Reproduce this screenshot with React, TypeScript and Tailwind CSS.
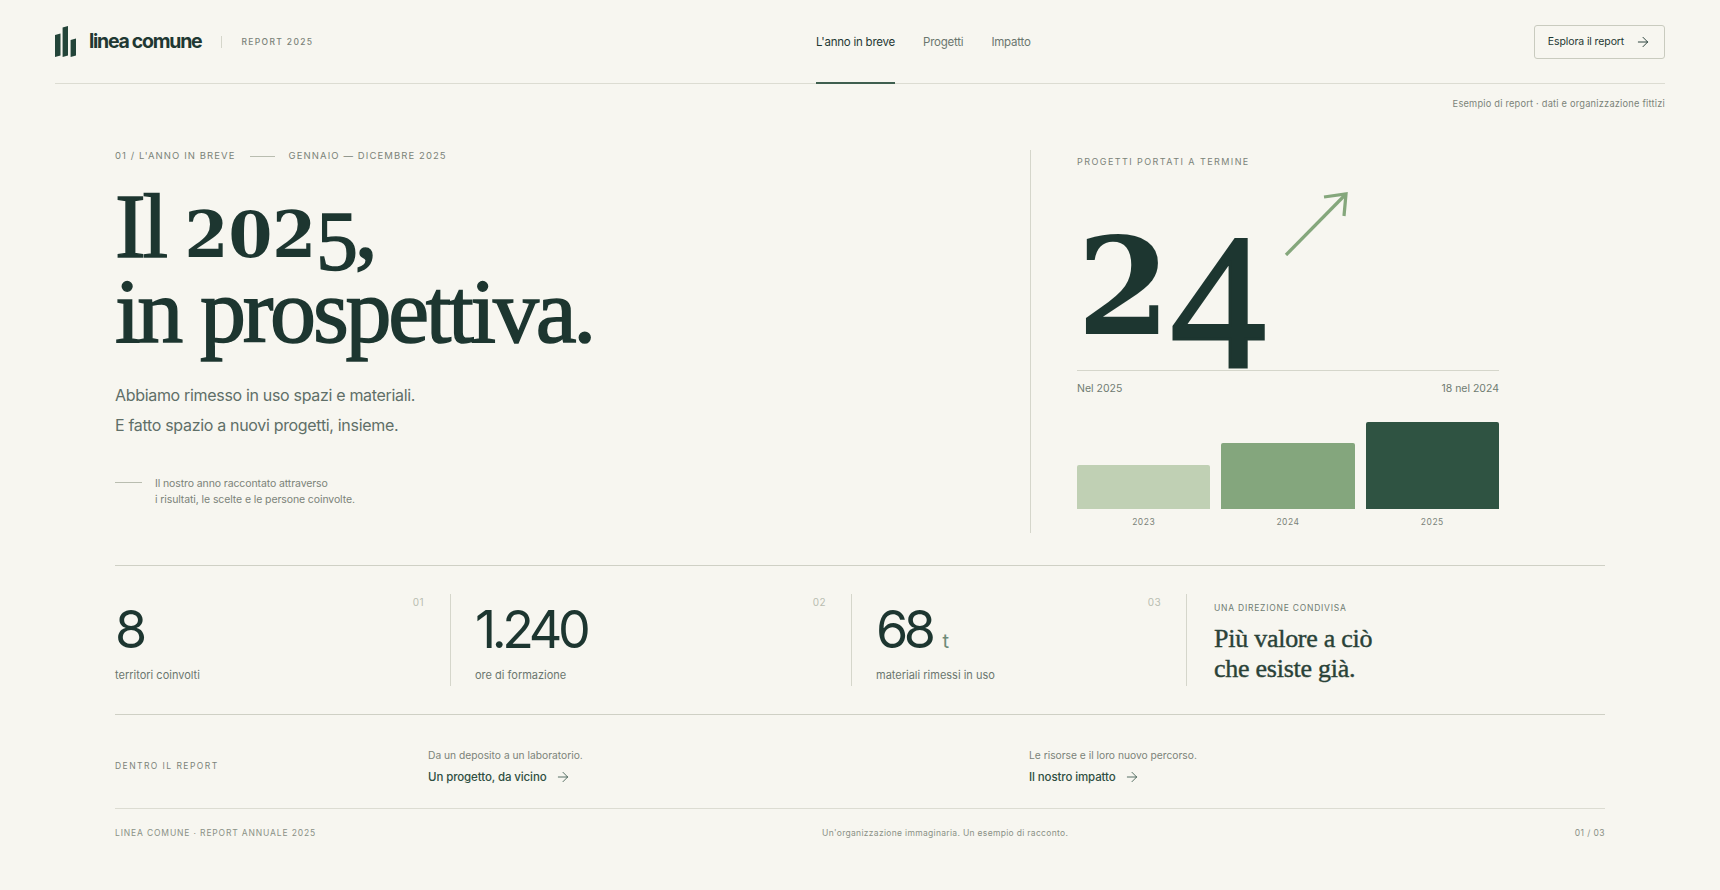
import { ArrowRight } from "lucide-react";

const stats = [
  { value: "8", label: "territori coinvolti", index: "01", className: "pr-[26px]" },
  { value: "1.240", label: "ore di formazione", index: "02", className: "pl-[24px] pr-[25px] border-l border-[#d5d6cb]" },
  { value: "68", unit: "t", label: "materiali rimessi in uso", index: "03", className: "pl-[24px] pr-[25px] border-l border-[#d5d6cb]" },
];

const bars = [
  { year: "2023", className: "h-[44px] bg-[#c0d0b4]" },
  { year: "2024", className: "h-[66px] bg-[#84a67d]" },
  { year: "2025", className: "h-[87px] bg-[#2f5342]" },
];

function Logo() {
  return (
    <svg width="21" height="31" viewBox="0 0 21 31" fill="#234439" className="shrink-0">
      <polygon points="0,9 5.5,7.5 5.5,29.5 0,31" />
      <polygon points="7.6,1.5 13,0 13,29.5 7.6,31" />
      <polygon points="15.6,14 21,12.5 21,29.5 15.6,31" />
    </svg>
  );
}

export default function App() {
  return (
    <div className="min-h-[890px] bg-[#f7f6f0] font-['Inter',sans-serif] text-[#1d3630]">
      {/* Header */}
      <header className="mx-[55px] h-[84px] flex items-center justify-between border-b border-[#dcdcd2] relative">
        <div className="flex items-center">
          <Logo />
          <span className="ml-[13px] pt-[1px] text-[19.5px] font-bold tracking-[-0.065em] text-[#1f3833]">linea comune</span>
          <span className="ml-[20px] h-[12px] w-px bg-[#d5d6cb]"></span>
          <span className="ml-[19px] pt-[1px] text-[8.5px] font-medium tracking-[0.16em] text-[#7b8379]">REPORT 2025</span>
        </div>
        <nav className="absolute left-[761px] top-0 h-[84px] flex gap-[28px] text-[11.5px] tracking-[-0.02em] text-[#6b766f]">
          <a className="h-[84px] pt-[3px] flex items-center border-b-[2px] border-[#3f5f4f] text-[#1f3833]">L'anno in breve</a>
          <a className="h-[84px] pt-[3px] flex items-center border-b-[2px] border-transparent">Progetti</a>
          <a className="h-[84px] pt-[3px] flex items-center border-b-[2px] border-transparent">Impatto</a>
        </nav>
        <button className="w-[131px] h-[34px] flex items-center justify-center gap-[11px] rounded-[3px] border border-[#c9cbbf] text-[10.5px] tracking-[-0.01em] text-[#1f3833]">
          <span className="pt-[1px]">Esplora il report</span>
          <ArrowRight size={16} strokeWidth={1.4} />
        </button>
      </header>

      <div className="mx-[55px] mt-[13px] h-[13px] text-right text-[9.25px] leading-[13px] tracking-[0.023em] text-[#7b8379]">
        Esempio di report · dati e organizzazione fittizi
      </div>

      <main className="mx-[115px] mt-[40px]">
        {/* Hero */}
        <section className="grid grid-cols-[915px_1fr] h-[383px]">
          <div>
            <div className="flex items-center h-[12px] text-[9.5px] tracking-[0.115em] text-[#7b8379]">
              <span>01 / L'ANNO IN BREVE</span>
              <span className="mx-[14px] w-[25px] h-px bg-[#b9bdb0]"></span>
              <span>GENNAIO — DICEMBRE 2025</span>
            </div>
            <h1 className="mt-[22px] font-['Liberation_Serif',serif] text-[92px] leading-[85px] tracking-[-0.035em] [-webkit-text-stroke:1.5px_#1d3630]">
              <span className="block h-[85px]">
                Il{" "}
                <span className="font-['DejaVu_Serif',serif] font-bold text-[63px] tracking-normal [-webkit-text-stroke:0]">202</span>
                <span className="text-[84px] align-[-13px]">5</span>,
              </span>
              <span className="block h-[85px]">in prospettiva.</span>
            </h1>
            <p className="mt-[26px] text-[16px] leading-[30px] tracking-[-0.02em] text-[#5f6f68]">
              Abbiamo rimesso in uso spazi e materiali.
              <br />
              E fatto spazio a nuovi progetti, insieme.
            </p>
            <div className="mt-[36px] flex items-start gap-[13px]">
              <span className="mt-[6px] w-[27px] h-px bg-[#b9bdb0]"></span>
              <p className="text-[10.5px] leading-[16px] tracking-[-0.01em] text-[#7b8379]">
                Il nostro anno raccontato attraverso
                <br />
                i risultati, le scelte e le persone coinvolte.
              </p>
            </div>
          </div>

          <div className="border-l border-[#d5d6cb] pl-[46px] pr-[106px]">
            <div className="mt-[6px] text-[9px] leading-[12px] tracking-[0.16em] text-[#7b8379]">PROGETTI PORTATI A TERMINE</div>
            <div className="h-[203px] flex border-b border-[#d5d6cb]">
              <div className="w-[207px] h-[201px] font-['Liberation_Serif',serif] leading-[239px] whitespace-nowrap">
                <span className="font-['DejaVu_Serif',serif] font-bold text-[134px]">2</span>
                <span className="text-[192px] align-[-33px] [-webkit-text-stroke:3px_#1d3630]">4</span>
              </div>
              <svg width="64" height="64" viewBox="0 0 64 64" fill="none" stroke="#85a77c" strokeWidth="3.25" className="mt-[24px]">
                <path d="M2 63 L62 2" />
                <path d="M40 5 L62 2 L60 24" />
              </svg>
            </div>
            <div className="mt-[11px] flex justify-between text-[10.5px] leading-[14px] text-[#6f7c72]">
              <span>Nel 2025</span>
              <span>18 nel 2024</span>
            </div>
            <div className="mt-[26px] grid grid-cols-3 gap-[11px] h-[87px] items-end">
              {bars.map((bar) => (
                <div key={bar.year} className={`rounded-t-[2px] ${bar.className}`}></div>
              ))}
            </div>
            <div className="mt-[7px] grid grid-cols-3 gap-[11px] text-center text-[8.5px] leading-[12px] tracking-[0.06em] text-[#7b8379]">
              {bars.map((bar) => (
                <span key={bar.year}>{bar.year}</span>
              ))}
            </div>
          </div>
        </section>

        {/* Stats */}
        <section className="mt-[32px] border-y border-[#cfd0c5] py-[28px]">
          <div className="grid grid-cols-[335px_401px_335px_1fr] h-[92px]">
            {stats.map((stat) => (
              <div key={stat.index} className={`relative ${stat.className}`}>
                <span className={`absolute top-[1px] text-[10px] tracking-[0.04em] text-[#b9bdb0] ${stat.index === "01" ? "right-[26px]" : "right-[25px]"}`}>{stat.index}</span>
                <div className="mt-[11px] h-[50px] text-[52px] leading-[50px] tracking-[-0.085em] text-[#1d3630]">
                  {stat.value}
                  {stat.unit && <span className="ml-[11px] text-[20px] tracking-normal text-[#6f8a78]">{stat.unit}</span>}
                </div>
                <div className="mt-[12px] text-[11px] leading-[16px] text-[#6b766f]">{stat.label}</div>
              </div>
            ))}
            <div className="border-l border-[#d5d6cb] pl-[27px]">
              <div className="mt-[8px] text-[8.5px] leading-[12px] tracking-[0.09em] text-[#6f7c72]">UNA DIREZIONE CONDIVISA</div>
              <p className="mt-[10px] font-['Liberation_Serif',serif] text-[26px] leading-[30px] tracking-[-0.01em] text-[#2a4238] [-webkit-text-stroke:0.4px_#2a4238]">
                Più valore a ciò
                <br />
                che esiste già.
              </p>
            </div>
          </div>
        </section>

        {/* Links */}
        <section className="grid grid-cols-[313px_601px_1fr] h-[94px] pt-[9px] items-center border-b border-[#dcdcd2]">
          <div className="text-[8.5px] tracking-[0.17em] text-[#7b8379]">DENTRO IL REPORT</div>
          <div>
            <p className="text-[10.25px] leading-[14px] text-[#7b8379]">Da un deposito a un laboratorio.</p>
            <a className="mt-[7px] flex items-center gap-[8px] text-[11.5px] leading-[16px] tracking-[-0.01em] font-medium text-[#2f4f42]">
              Un progetto, da vicino
              <ArrowRight size={16} strokeWidth={1.2} />
            </a>
          </div>
          <div>
            <p className="text-[10.25px] leading-[14px] text-[#7b8379]">Le risorse e il loro nuovo percorso.</p>
            <a className="mt-[7px] flex items-center gap-[8px] text-[11.5px] leading-[16px] tracking-[-0.01em] font-medium text-[#2f4f42]">
              Il nostro impatto
              <ArrowRight size={16} strokeWidth={1.2} />
            </a>
          </div>
        </section>

        {/* Footer */}
        <footer className="mt-[17px] grid grid-cols-[707px_1fr_auto] items-center h-[14px] text-[8.5px] text-[#8a9186]">
          <span className="tracking-[0.1em]">LINEA COMUNE · REPORT ANNUALE 2025</span>
          <span className="tracking-[0.037em]">Un'organizzazione immaginaria. Un esempio di racconto.</span>
          <span className="tracking-[0.05em]">01 / 03</span>
        </footer>
      </main>
    </div>
  );
}
